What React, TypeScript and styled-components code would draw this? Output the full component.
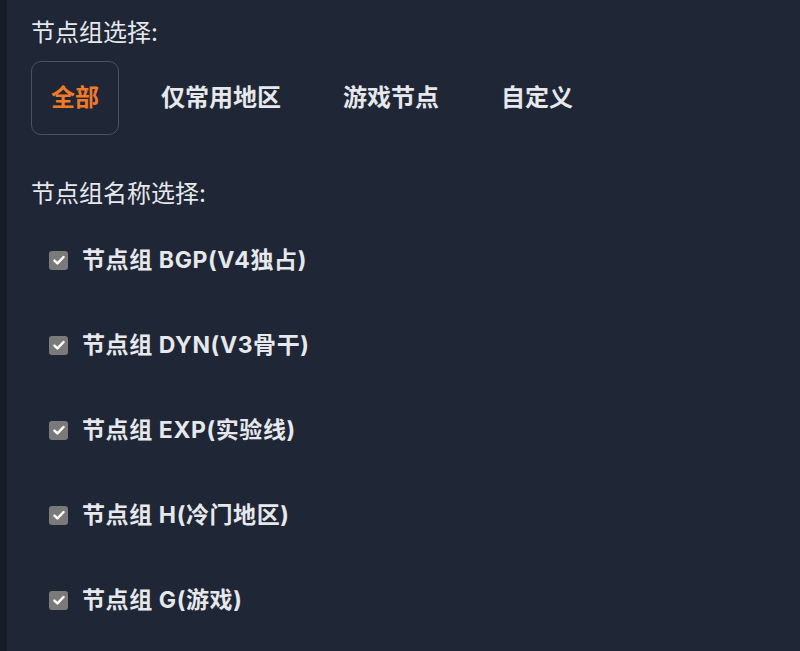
import React, { useState } from 'react';
import styled, { createGlobalStyle } from 'styled-components';

const GlobalStyle = createGlobalStyle`
	html, body {
		margin: 0;
		padding: 0;
		background: #1f2636;
	}
	body {
		font-family: "Inter", "Noto Sans CJK SC", sans-serif;
	}
`;

const groups = ['全部', '仅常用地区', '游戏节点', '自定义'];

const nodeGroups = [
	'节点组 BGP(V4独占)',
	'节点组 DYN(V3骨干)',
	'节点组 EXP(实验线)',
	'节点组 H(冷门地区)',
	'节点组 G(游戏)',
];

const App: React.FC = () => {
	const [active, setActive] = useState('全部');
	const [checked, setChecked] = useState<string[]>(nodeGroups);

	const toggle = (name: string) => {
		setChecked((prev) =>
			prev.includes(name) ? prev.filter((n) => n !== name) : [...prev, name]
		);
	};

	return (
		<>
			<GlobalStyle />
			<Page>
				<Strip />
				<Panel>
					<Label>节点组选择:</Label>
					<Tabs>
						{groups.map((g) => (
							<Tab key={g} active={active === g} onClick={() => setActive(g)}>
								{g}
							</Tab>
						))}
					</Tabs>
					<Label>节点组名称选择:</Label>
					<List>
						{nodeGroups.map((name) => (
							<Row key={name} onClick={() => toggle(name)}>
								<Box checked={checked.includes(name)}>
									{checked.includes(name) && (
										<svg width='14' height='14' viewBox='0 0 16 16'>
											<path
												d='M2.8 8.6l3.4 3.3L13.2 4.6'
												fill='none'
												stroke='#fff'
												strokeWidth='2.8'
												strokeLinecap='round'
												strokeLinejoin='round'
											/>
										</svg>
									)}
								</Box>
								<RowText>{name}</RowText>
							</Row>
						))}
					</List>
				</Panel>
			</Page>
		</>
	);
};

interface activeProp {
	active: boolean;
}

interface checkedProp {
	checked: boolean;
}

const Page = styled.div`
	display: flex;
	flex-direction: row;
	width: 100%;
	min-height: 651px;
	background-color: #1f2636;
	color: #e6e8ec;
`;

const Strip = styled.div`
	width: 7px;
	flex-shrink: 0;
	background-color: #161c28;
`;

const Panel = styled.div`
	display: flex;
	flex-direction: column;
	padding: 16px 0 0 24px;
`;

const Label = styled.div`
	font-size: 24px;
	line-height: 34px;
	font-weight: 400;
	color: #e6e8ec;
`;

const Tabs = styled.div`
	display: flex;
	flex-direction: row;
	gap: 22px;
	margin: 11px 0 42px 0;
`;

const Tab = styled.button<activeProp>`
	font-family: inherit;
	font-size: 24px;
	font-weight: 700;
	line-height: 32px;
	padding: 20px 19px;
	border-radius: 10px;
	background: transparent;
	cursor: pointer;
	border: 1px solid ${({ active }) => (active ? '#4b5262' : 'transparent')};
	color: ${({ active }) => (active ? '#f07a2a' : '#e6e8ec')};
`;

const List = styled.div`
	display: flex;
	flex-direction: column;
	gap: 51px;
	margin-top: 32px;
	padding-left: 18px;
`;

const Row = styled.label`
	display: flex;
	flex-direction: row;
	align-items: center;
	gap: 14px;
	height: 34px;
	cursor: pointer;
`;

const Box = styled.span<checkedProp>`
	display: flex;
	align-items: center;
	justify-content: center;
	width: 19px;
	height: 19px;
	border-radius: 3px;
	background-color: ${({ checked }) => (checked ? '#7a7a7a' : 'transparent')};
	border: ${({ checked }) => (checked ? 'none' : '1px solid #7a7a7a')};
`;

const RowText = styled.span`
	font-size: 23px;
	font-weight: 700;
	line-height: 34px;
	letter-spacing: 0.6px;
	color: #e6e8ec;
`;

export default App;
